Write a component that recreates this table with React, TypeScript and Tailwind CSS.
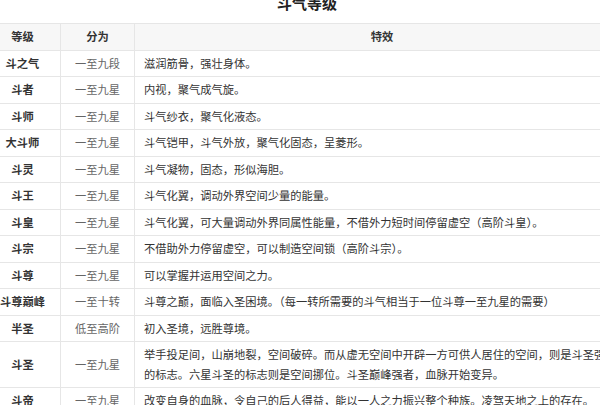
import React from 'react';

type Level = {
  name: string;
  range: string;
  effect: string;
};

const LEVELS: Level[] = [
  { name: '斗之气', range: '一至九段', effect: '滋润筋骨，强壮身体。' },
  { name: '斗者', range: '一至九星', effect: '内视，聚气成气旋。' },
  { name: '斗师', range: '一至九星', effect: '斗气纱衣，聚气化液态。' },
  { name: '大斗师', range: '一至九星', effect: '斗气铠甲，斗气外放，聚气化固态，呈菱形。' },
  { name: '斗灵', range: '一至九星', effect: '斗气凝物，固态，形似海胆。' },
  { name: '斗王', range: '一至九星', effect: '斗气化翼，调动外界空间少量的能量。' },
  {
    name: '斗皇',
    range: '一至九星',
    effect: '斗气化翼，可大量调动外界同属性能量，不借外力短时间停留虚空（高阶斗皇）。',
  },
  { name: '斗宗', range: '一至九星', effect: '不借助外力停留虚空，可以制造空间锁（高阶斗宗）。' },
  { name: '斗尊', range: '一至九星', effect: '可以掌握并运用空间之力。' },
  {
    name: '斗尊巅峰',
    range: '一至十转',
    effect: '斗尊之巅，面临入圣困境。（每一转所需要的斗气相当于一位斗尊一至九星的需要）',
  },
  { name: '半圣', range: '低至高阶', effect: '初入圣境，远胜尊境。' },
  {
    name: '斗圣',
    range: '一至九星',
    effect:
      '举手投足间，山崩地裂，空间破碎。而从虚无空间中开辟一方可供人居住的空间，则是斗圣强者的标志。六星斗圣的标志则是空间挪位。斗圣巅峰强者，血脉开始变异。',
  },
  {
    name: '斗帝',
    range: '一至九星',
    effect: '改变自身的血脉，令自己的后人得益，能以一人之力振兴整个种族。凌驾天地之上的存在。',
  },
];

// 斗气等级表：页面比窗口宽，左右两侧都被截掉一点
export default function App() {
  return (
    <div className="h-[405px] w-[600px] overflow-hidden bg-white font-['Noto_Sans_CJK_SC',sans-serif] text-[#333]">
      <div className="-ml-[16px] w-[646px]">
        <h2 className="-mt-[7px] mb-[10px] h-[20px] text-center text-[15px] font-bold leading-[20px] text-[#222]">
          斗气等级
        </h2>
        <table className="w-full table-fixed border-collapse text-[11.25px] leading-[19.5px]">
          <colgroup>
            <col className="w-[76px]" />
            <col className="w-[74px]" />
            <col />
          </colgroup>
          <thead>
            <tr className="bg-[#f7f7f7]">
              <th className="border border-[#e6e6e6] py-[3px] text-center font-bold">等级</th>
              <th className="border border-[#e6e6e6] py-[3px] text-center font-bold">分为</th>
              <th className="border border-[#e6e6e6] py-[3px] text-center font-bold">特效</th>
            </tr>
          </thead>
          <tbody>
            {LEVELS.map((l) => (
              <tr key={l.name}>
                <td className="whitespace-nowrap border border-[#e6e6e6] py-[3px] text-center font-bold text-[#333]">
                  {l.name}
                </td>
                <td className="border border-[#e6e6e6] py-[3px] text-center text-[#666]">
                  {l.range}
                </td>
                <td className="border border-[#e6e6e6] px-[9px] py-[3px] text-left text-[#333]">
                  {l.effect}
                </td>
              </tr>
            ))}
          </tbody>
        </table>
      </div>
    </div>
  );
}
